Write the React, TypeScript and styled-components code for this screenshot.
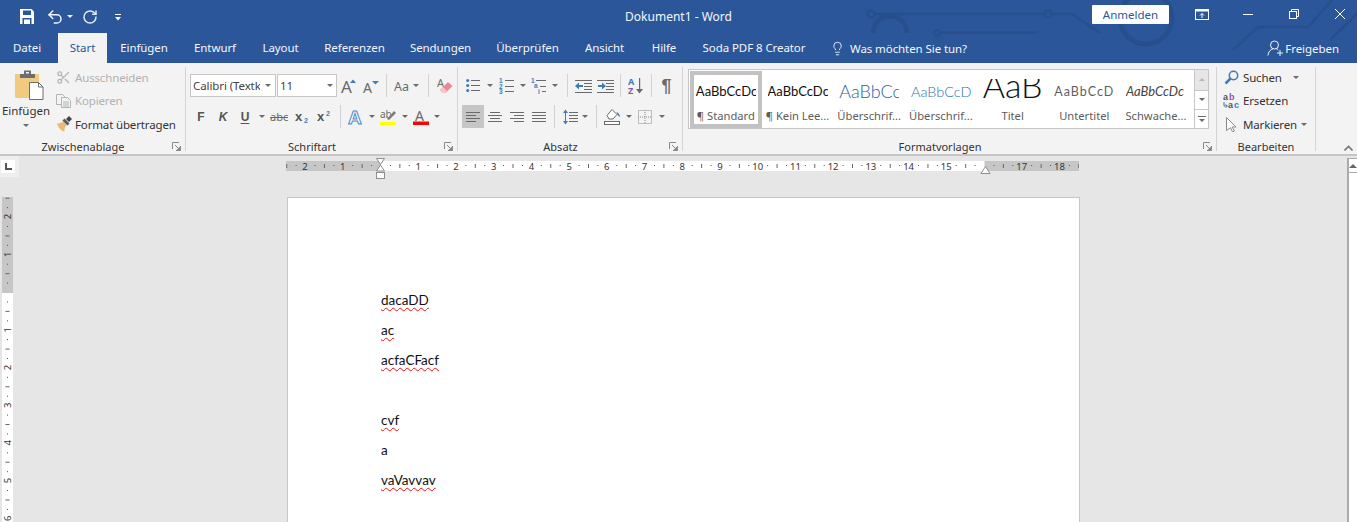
import React from "react";
import styled, { createGlobalStyle } from "styled-components";
import { Lightbulb, RotateCw, Scissors, Undo2 } from "lucide-react";

const UI_FONT = `"Noto Sans", "Open Sans", sans-serif`;
const DOC_FONT = `"Lato", "Liberation Sans", sans-serif`;
const GREY = "#6a6a6a";
const BLUE = "#3f7cb8";

const GlobalStyle = createGlobalStyle`
  html, body { margin: 0; padding: 0; height: 100%; overflow: hidden; background: #e6e6e6; }
  body { font-family: ${UI_FONT}; font-size: 12px; color: #333; }
  * { box-sizing: border-box; }
  svg { display: block; flex: none; }
`;

const Window = styled.div`
  width: 1357px;
  height: 522px;
  display: flex;
  flex-direction: column;
  overflow: hidden;
`;

/* ---------- header ---------- */

const Header = styled.header`
  position: relative;
  background: #2b579a;
  color: #fff;
  height: 63px;
  flex: none;
`;

const Circuit = styled.svg`
  position: absolute;
  left: 0;
  top: 0;
`;

const TitleBar = styled.div`
  position: relative;
  height: 33px;
  display: grid;
  grid-template-columns: 1fr auto 1fr;
  align-items: center;
`;

const QuickAccess = styled.div`
  display: flex;
  align-items: center;
  padding-left: 18px;
`;

const QuickSlot = styled.div<{ $w: number; $pl?: number }>`
  width: ${(p) => p.$w}px;
  padding-left: ${(p) => p.$pl ?? 0}px;
  display: flex;
  align-items: center;
  justify-content: center;
`;

const TitleText = styled.div`
  font-size: 12px;
  color: #f4f6fa;
`;

const WindowActions = styled.div`
  display: flex;
  justify-content: flex-end;
  align-items: center;
  margin-right: -6px;
`;

const SignIn = styled.div`
  width: 77px;
  height: 19px;
  margin: -4px 10px 0 0;
  background: #fff;
  color: #2b579a;
  border-radius: 1px;
  font-size: 11.5px;
  line-height: 19px;
  text-align: center;
`;

const WindowButton = styled.div`
  width: 46px;
  height: 28px;
  margin-top: -5px;
  display: flex;
  align-items: center;
  justify-content: center;
`;

const TabBar = styled.nav`
  position: relative;
  height: 30px;
  display: flex;
  align-items: stretch;
`;

const Tab = styled.div<{ $active?: boolean; $w: number; $first?: boolean }>`
  width: ${(p) => p.$w}px;
  flex: none;
  padding-left: ${(p) => (p.$first ? 13 : 0)}px;
  text-align: ${(p) => (p.$first ? "left" : "center")};
  line-height: 29px;
  font-size: 11.5px;
  letter-spacing: -0.08px;
  white-space: nowrap;
  color: ${(p) => (p.$active ? "#2b579a" : "#f4f6fa")};
  background: ${(p) => (p.$active ? "#f3f3f3" : "transparent")};
`;

const TellMe = styled.div`
  display: flex;
  align-items: center;
  gap: 5px;
  margin-left: 12px;
  font-size: 11.5px;
  letter-spacing: -0.08px;
  color: #f4f6fa;
`;

const Share = styled.div`
  margin-left: auto;
  padding-right: 18px;
  display: flex;
  align-items: center;
  gap: 2px;
  font-size: 11.5px;
  letter-spacing: -0.05px;
  color: #f4f6fa;
`;

/* ---------- ribbon ---------- */

const Ribbon = styled.section`
  height: 93px;
  flex: none;
  display: flex;
  padding-top: 4px;
  background: #f3f3f3;
  border-bottom: 2px solid #c6c6c6;
`;

const Group = styled.div<{ $w: number }>`
  position: relative;
  width: ${(p) => p.$w}px;
  height: 84px;
  flex: none;
  display: flex;
  flex-direction: column;
  border-right: 1px solid #d4d4d4;
`;

const GroupBody = styled.div<{ $pad?: number; $top?: number }>`
  flex: 1;
  min-height: 0;
  padding: ${(p) => p.$top ?? 7}px 0 0 ${(p) => p.$pad ?? 4}px;
`;

const GroupLabel = styled.div<{ $plain?: boolean }>`
  height: 14px;
  margin-bottom: -3px;
  padding-right: ${(p) => (p.$plain ? 0 : 19)}px;
  line-height: 14px;
  font-size: 11px;
  text-align: center;
  color: #333;
`;

const Launcher = styled.svg`
  position: absolute;
  right: 4px;
  bottom: 0;
`;

const ToolRow = styled.div<{ $gap?: number }>`
  height: 23px;
  display: flex;
  align-items: center;
  margin-bottom: ${(p) => p.$gap ?? 8}px;
`;

const Tool = styled.div<{ $w: number; $on?: boolean }>`
  width: ${(p) => p.$w}px;
  height: 23px;
  flex: none;
  display: flex;
  align-items: center;
  justify-content: center;
  background: ${(p) => (p.$on ? "#c6c6c6" : "transparent")};
`;

const Caret = styled.span<{ $w?: number; $h?: number; $color?: string }>`
  width: ${(p) => p.$w ?? 14}px;
  height: ${(p) => p.$h ?? 23}px;
  flex: none;
  display: flex;
  align-items: center;
  justify-content: center;
  &::after {
    content: "";
    border-top: 3px solid ${(p) => p.$color ?? GREY};
    border-left: 3px solid transparent;
    border-right: 3px solid transparent;
  }
`;

const Divider = styled.span<{ $l: number; $r: number }>`
  width: 1px;
  height: 23px;
  flex: none;
  margin: 0 ${(p) => p.$r}px 0 ${(p) => p.$l}px;
  background: #d2d2d2;
`;

const Glyph = styled.span<{ $italic?: boolean; $under?: boolean }>`
  font-family: "Liberation Sans", sans-serif;
  font-weight: 700;
  font-size: 12px;
  color: #555;
  font-style: ${(p) => (p.$italic ? "italic" : "normal")};
  text-decoration: ${(p) => (p.$under ? "underline" : "none")};
  text-underline-offset: 2px;
`;

const PasteButton = styled.div`
  width: 52px;
  flex: none;
  display: flex;
  flex-direction: column;
  align-items: center;
  padding-top: 3px;
  font-size: 11.5px;
  color: #333;
`;

const PasteIconBox = styled.div`
  padding-left: 8px;
`;

const PasteLabel = styled.div`
  margin-top: 3px;
  line-height: 16px;
`;

const SmallList = styled.div`
  display: flex;
  flex-direction: column;
  padding-left: 4px;
  margin-top: -1px;
`;

const SmallAction = styled.div<{ $off?: boolean }>`
  height: 23.3px;
  display: flex;
  align-items: center;
  gap: 4px;
  white-space: nowrap;
  font-size: 11.5px;
  letter-spacing: -0.15px;
  color: ${(p) => (p.$off ? "#b1b1b1" : "#333")};
`;

const IconBox = styled.span<{ $w?: number }>`
  width: ${(p) => p.$w ?? 15}px;
  flex: none;
  display: flex;
  justify-content: center;
`;

const ClipRow = styled.div`
  display: flex;
  height: 100%;
`;

const EditList = styled.div`
  margin-top: -1px;
`;

const Combo = styled.div<{ $w: number }>`
  width: ${(p) => p.$w}px;
  height: 23px;
  flex: none;
  display: flex;
  align-items: center;
  background: #fff;
  border: 1px solid #c6c6c6;
  margin-right: 1px;
  padding-left: 2px;
  font-size: 11.5px;
  letter-spacing: -0.1px;
  color: #444;
  overflow: hidden;
  white-space: nowrap;
`;

const ComboText = styled.span`
  flex: 1;
  overflow: hidden;
`;

const Gallery = styled.div`
  display: flex;
  height: 60px;
  margin: 2px 0 0 5px;
  width: 521px;
  border: 1px solid #c6c6c6;
  background: #fff;
`;

const GalleryItems = styled.div`
  flex: 1;
  display: flex;
  padding: 1px 2px 0 1px;
`;

const StyleCard = styled.div<{ $selected?: boolean }>`
  width: 71.7px;
  height: 57px;
  flex: none;
  display: flex;
  flex-direction: column;
  align-items: center;
  padding-top: ${(p) => (p.$selected ? 2 : 6)}px;
  border: ${(p) => (p.$selected ? "4px solid #c2c2c2" : "none")};
`;

const Preview = styled.div<{ $size: number; $color: string; $italic?: boolean; $spaced?: boolean; $big?: boolean; $light?: boolean }>`
  width: 60px;
  height: ${(p) => (p.$big ? 27 : 29)}px;
  margin-top: ${(p) => (p.$big ? 2 : 0)}px;
  flex: none;
  overflow: hidden;
  white-space: nowrap;
  text-align: ${(p) => (p.$big ? "center" : "left")};
  font-family: ${DOC_FONT};
  font-size: ${(p) => p.$size}px;
  line-height: ${(p) => (p.$big ? 11 : 29)}px;
  font-weight: ${(p) => (p.$light ? 300 : 400)};
  font-style: ${(p) => (p.$italic ? "italic" : "normal")};
  letter-spacing: ${(p) => (p.$spaced ? "1px" : "0")};
  color: ${(p) => p.$color};
`;

const StyleName = styled.div`
  font-size: 11.2px;
  line-height: 14px;
  margin-top: 3px;
  color: #5c5c5c;
  white-space: nowrap;
`;

const GalleryScroll = styled.div`
  width: 14px;
  margin-left: auto;
  display: flex;
  flex-direction: column;
  border-left: 1px solid #c6c6c6;
`;

const ScrollStep = styled.div<{ $off?: boolean; $h: number }>`
  height: ${(p) => p.$h}px;
  display: flex;
  align-items: center;
  justify-content: center;
  background: ${(p) => (p.$off ? "#e6e6e6" : "#fff")};
  border-bottom: 1px solid #c6c6c6;
  &:last-child { border-bottom: none; }
`;

const Collapse = styled.svg`
  align-self: flex-end;
  margin: 0 0 3px 28px;
`;

/* ---------- document area ---------- */

const WorkArea = styled.main`
  flex: 1;
  min-height: 0;
  display: flex;
  background: #e6e6e6;
`;

const Canvas = styled.div`
  flex: 1;
  min-width: 0;
  display: flex;
  flex-direction: column;
`;

const RulerRow = styled.div`
  height: 41px;
  flex: none;
  display: flex;
  align-items: flex-start;
`;

const TabCorner = styled.div`
  width: 19px;
  height: 21px;
  flex: none;
  padding: 4px 0 0 1px;
  background: #eeeeee;
`;

const TabStopButton = styled.div`
  width: 14px;
  height: 13px;
  background: #fff;
  display: flex;
  align-items: center;
  justify-content: center;
`;

const HorizontalRuler = styled.svg`
  margin: -1px 0 0 267px;
`;

const DocRow = styled.div`
  flex: 1;
  min-height: 0;
  display: flex;
  align-items: flex-start;
  padding-left: 2px;
`;

const Page = styled.article`
  width: 793px;
  height: 340px;
  margin-left: 274px;
  padding: 87px 0 0 93px;
  background: #fff;
  border: 1px solid #c6c6c6;
  border-bottom: none;
  font-family: ${DOC_FONT};
  font-size: 13.5px;
  color: #111;
`;

const Para = styled.p`
  height: 30px;
  margin: 0;
  line-height: 30px;
`;

const Misspelled = styled.span`
  text-decoration: underline wavy #f01010;
  text-decoration-thickness: 1px;
  text-underline-offset: 1.5px;
`;

const ScrollBar = styled.div`
  width: 10px;
  flex: none;
  margin-top: 2px;
  background: #fff;
  border-left: 2px solid #ababab;
  border-top: 1px solid #ababab;
`;

const ScrollUp = styled.div`
  height: 14px;
  display: flex;
  align-items: center;
  justify-content: center;
  border-bottom: 1px solid #ababab;
  &::after {
    content: "";
    border-bottom: 4px solid #666;
    border-left: 4px solid transparent;
    border-right: 4px solid transparent;
  }
`;

/* ---------- drawings ---------- */

const Svg: React.FC<{ w?: number; h?: number; children: React.ReactNode }> = ({ w = 16, h = 16, children }) => (
  <svg width={w} height={h} viewBox={`0 0 ${w} ${h}`}>
    {children}
  </svg>
);

type Seg = [number, number, number];

const Lines: React.FC<{ segs: Seg[]; color?: string }> = ({ segs, color = GREY }) => (
  <>
    {segs.map(([a, b, y], i) => (
      <rect key={i} x={a} y={y} width={b - a} height={1} fill={color} />
    ))}
  </>
);

const SaveIcon = () => (
  <Svg w={14} h={15}>
    <path d="M0 0h11.5L14 2.5V15H0z" fill="#fff" />
    <rect x="3" y="1.5" width="8" height="4.5" fill="#2b579a" />
    <rect x="2.5" y="9" width="9" height="6" fill="#2b579a" />
    <rect x="4" y="10.5" width="6" height="4.5" fill="#fff" />
  </Svg>
);

const CustomizeIcon = () => (
  <Svg w={8} h={8}>
    <rect x="1" y="1" width="6" height="1" fill="#fff" />
    <path d="M1 4h6L4 7.5z" fill="#fff" />
  </Svg>
);

const RibbonDisplayIcon = () => (
  <svg width="14" height="11" viewBox="0 0 14 11" fill="none">
    <rect x="0.5" y="0.5" width="13" height="10" stroke="#fff" />
    <rect x="0.5" y="0.5" width="13" height="2" fill="#fff" />
    <path d="M7 9V4.5M5 6.5l2-2 2 2" stroke="#fff" />
  </svg>
);

const MinimizeIcon = () => <Svg w={10} h={1}><rect width="10" height="1" fill="#fff" /></Svg>;

const RestoreIcon = () => (
  <svg width="10" height="10" viewBox="0 0 10 10" fill="none" stroke="#fff">
    <rect x="0.5" y="2.5" width="7" height="7" />
    <path d="M2.5 2.5v-2h7v7h-2" />
  </svg>
);

const CloseIcon = () => (
  <svg width="10" height="10" viewBox="0 0 10 10" fill="none" stroke="#fff">
    <path d="M0 0l10 10M10 0L0 10" />
  </svg>
);

const ShareIcon = () => (
  <svg width="16" height="16" viewBox="0 0 16 16" fill="none" stroke="#f0f3f8">
    <circle cx="7.5" cy="5" r="4" />
    <path d="M1 15.5c0-3.5 2.5-6 5-6.7M9 8.6c1 .3 1.8.8 2.4 1.4M10 13h6M13 10v6" />
  </svg>
);

const PasteIcon = () => (
  <svg width="30" height="30" viewBox="0 0 30 30">
    <path d="M0 4h24v24H1.5A1.5 1.5 0 0 1 0 26.5z" fill="#f1c97f" />
    <path d="M5 4h15v4H5z" fill="#6e6e6e" />
    <path d="M9 0.5h7v4H9z" fill="#6e6e6e" />
    <rect x="11" y="2" width="3" height="1.5" fill="#f3f3f3" />
    <path d="M14.5 12.5h9l4.5 4.5v12.5H14.5z" fill="#fff" stroke="#6e6e6e" />
    <path d="M23.5 12.5V17H28" fill="none" stroke="#6e6e6e" />
  </svg>
);

const CopyIcon = () => (
  <svg width="15" height="14" viewBox="0 0 15 14" fill="#f3f3f3" stroke="#b3b3b3">
    <path d="M0.5 0.5h6l2 2v8h-8z" />
    <path d="M5.5 3.5h6l3 3v7h-9z" />
    <path d="M7 8h6M7 10h6M7 12h6" />
  </svg>
);

const PainterIcon = () => (
  <svg width="16" height="16" viewBox="0 0 16 16">
    <path d="M1 7.5c3 .5 5-1 6-2.5l4 4c-1.5 1-3 3.5-2.5 6.5C5 15 2 11.500 1 7.5z" fill="#e9bb74" />
    <path d="M6.5 4.5l2-2 5 5-2 2z" fill="#5a5a5a" />
    <path d="M10 3l3-3 3 3-3 3z" fill="#444" />
  </svg>
);

const GrowIcon: React.FC<{ shrink?: boolean }> = ({ shrink }) => (
  <Svg w={18} h={18}>
    <text x="1" y="16" fontFamily="Noto Sans" fontSize={shrink ? 14 : 17} fill={GREY}>A</text>
    <path d={shrink ? "M10 4h7l-3.5 3.5z" : "M10 6h6l-3-3.5z"} fill={BLUE} />
  </Svg>
);

const CaseIcon = () => (
  <Svg w={18} h={16}>
    <text x="0" y="13" fontFamily="Noto Sans" fontSize="12.5" fill={GREY}>Aa</text>
  </Svg>
);

const EraserIcon = () => (
  <Svg w={16} h={17}>
    <text x="0" y="10" fontFamily="Noto Sans" fontSize="11" fill={GREY}>A</text>
    <path d="M3 13l8-8 4.5 4-7 7H6z" fill="#ec8795" />
    <path d="M3 13l3-3 4 4-2 2H6z" fill="#f6c4cb" />
  </Svg>
);

const StrikeIcon = () => (
  <Svg w={20} h={14}>
    <text x="0" y="11" fontFamily="Noto Sans" fontSize="11" fill={GREY}>abc</text>
    <rect x="0" y="7" width="18" height="1" fill={GREY} />
  </Svg>
);

const ScriptIcon: React.FC<{ sup?: boolean }> = ({ sup }) => (
  <Svg w={16} h={14}>
    <text x="0" y="11" fontFamily="Liberation Sans" fontWeight="700" fontSize="13" fill="#555">x</text>
    <text x="9" y={sup ? 6 : 13} fontFamily="Liberation Sans" fontWeight="700" fontSize="7" fill={BLUE}>2</text>
  </Svg>
);

const EffectIcon = () => (
  <Svg w={16} h={16}>
    <text x="0" y="15" fontFamily="Liberation Sans" fontWeight="700" fontSize="19" fill="#fff" stroke="#4d87c7" strokeWidth="1">A</text>
  </Svg>
);

const HighlightIcon = () => (
  <Svg w={16} h={16}>
    <text x="0" y="9" fontFamily="Noto Sans" fontSize="10" fill={GREY}>ab</text>
    <path d="M7 10l7-8 2 2-7 7z" fill="#7c7c7c" />
    <rect y="13" width="16" height="3.5" fill="#ffff00" />
  </Svg>
);

const FontColorIcon = () => (
  <Svg w={16} h={16}>
    <text x="2" y="12" fontFamily="Noto Sans" fontSize="14" fill={GREY}>A</text>
    <rect y="12.5" width="16" height="3.5" fill="#ff0000" />
  </Svg>
);

const BulletsIcon = () => (
  <Svg w={15} h={15}>
    <Lines segs={[[5, 14, 2], [5, 14, 7], [5, 14, 12]]} />
    {[2.5, 7.5, 12.5].map((y) => <circle key={y} cx="1.7" cy={y} r="1.6" fill={BLUE} />)}
  </Svg>
);

const NumberedIcon = () => (
  <Svg w={15} h={16}>
    <Lines segs={[[6, 15, 2], [6, 15, 8], [6, 15, 13]]} />
    {["1", "2", "3"].map((n, i) => (
      <text key={n} x="0" y={5 + i * 5.5} fontFamily="Liberation Sans" fontWeight="700" fontSize="6.5" fill={BLUE}>{n}</text>
    ))}
  </Svg>
);

const MultilevelIcon = () => (
  <Svg w={16} h={16}>
    <Lines segs={[[5, 15, 2], [9, 15, 8], [11, 15, 13]]} />
    <text x="0" y="5" fontFamily="Liberation Sans" fontWeight="700" fontSize="6.5" fill={BLUE}>1</text>
    <text x="3" y="10" fontFamily="Liberation Sans" fontWeight="700" fontSize="6.5" fill={BLUE}>a</text>
    <text x="7" y="16" fontFamily="Liberation Sans" fontWeight="700" fontSize="6.5" fill={BLUE}>i</text>
  </Svg>
);

const IndentIcon: React.FC<{ flip?: boolean }> = ({ flip }) => (
  <Svg w={17} h={14}>
    <Lines segs={[[0, 17, 1], [9, 17, 4], [9, 17, 7], [9, 17, 10], [0, 17, 13]]} />
    <path d={flip ? "M1 6h4V3.5L9 7l-4 3.5V8H1z" : "M8 6H4V3.5L0 7l4 3.5V8h4z"} fill={BLUE} />
  </Svg>
);

const SortIcon = () => (
  <Svg w={16} h={18}>
    <text x="0" y="8" fontFamily="Noto Sans" fontWeight="700" fontSize="9" fill={BLUE}>A</text>
    <text x="0" y="17" fontFamily="Noto Sans" fontWeight="700" fontSize="9" fill="#8a55b0">Z</text>
    <rect x="11" y="1" width="1.2" height="14" fill={GREY} />
    <path d="M8 12h7l-3.5 4.5z" fill={GREY} />
  </Svg>
);

const PilcrowIcon = () => (
  <Svg w={12} h={17}>
    <text x="0.5" y="15" fontFamily="Liberation Sans" fontWeight="700" fontSize="18" fill={GREY}>¶</text>
  </Svg>
);

const AlignIcon: React.FC<{ mode: "left" | "center" | "right" | "justify" }> = ({ mode }) => {
  const rows: Seg[] = [0, 1, 2, 3].map((i) => {
    const short = i % 2 === 1 ? 14 : 10;
    const w = i === 0 || i === 2 ? 14 : 10;
    if (mode === "justify") return [0, 14, 1 + i * 3];
    if (mode === "left") return [0, w, 1 + i * 3];
    if (mode === "right") return [14 - w, 14, 1 + i * 3];
    return [(14 - short) / 2, (14 + short) / 2, 1 + i * 3];
  });
  return <Svg w={14} h={12}><Lines segs={rows} /></Svg>;
};

const SpacingIcon = () => (
  <Svg w={15} h={16}>
    <Lines segs={[[6, 15, 3], [6, 15, 6], [6, 15, 9], [6, 15, 12]]} />
    <path d="M0 4l2.5-3.5L5 4H3v8h2l-2.5 3.5L0 12h2V4z" fill={BLUE} />
  </Svg>
);

const ShadingIcon = () => (
  <svg width="17" height="17" viewBox="0 0 17 17" fill="none">
    <path d="M3 7.5L8 1.5l5 5-4 4.5H5z" fill="#fff" stroke={GREY} />
    <path d="M12.5 4c2 1 3.5 2.5 3.5 5l-2.5-2z" fill={BLUE} />
    <rect x="0.5" y="13.5" width="15" height="3" fill="#fff" stroke={GREY} />
  </svg>
);

const BordersIcon = () => (
  <svg width="14" height="14" viewBox="0 0 14 14" fill="none" stroke="#8a8a8a" strokeDasharray="1 1">
    <rect x="0.5" y="0.5" width="13" height="13" />
    <path d="M7 0v14M0 7h14" />
  </svg>
);

const SearchIcon = () => (
  <svg width="15" height="15" viewBox="0 0 15 15" fill="none" stroke="#3f7cb8">
    <circle cx="9.5" cy="5.5" r="4.2" strokeWidth="1.5" />
    <path d="M6.5 8.5L1.5 13.5" strokeWidth="2.5" />
  </svg>
);

const ReplaceIcon = () => (
  <Svg w={17} h={16}>
    <text x="0" y="7" fontFamily="Liberation Sans" fontWeight="700" fontSize="9" fill="#555">a</text>
    <text x="6" y="7" fontFamily="Liberation Sans" fontWeight="700" fontSize="9" fill="#8a55b0">b</text>
    <text x="5" y="15" fontFamily="Liberation Sans" fontWeight="700" fontSize="9" fill="#555">a</text>
    <text x="11" y="15" fontFamily="Liberation Sans" fontWeight="700" fontSize="9" fill={BLUE}>c</text>
    <path d="M1 9v4h3M2.5 11.5L4.5 13l-2 1.5" fill="none" stroke={BLUE} />
  </Svg>
);

const SelectIcon = () => (
  <svg width="11" height="15" viewBox="0 0 11 15" fill="#fff" stroke="#8a8a8a">
    <path d="M0.5 0.5l9.5 9.5H6l2.5 4-2 .8L4.5 10.7 0.5 13.5z" />
  </svg>
);

const TinyCaret: React.FC<{ up?: boolean; line?: boolean; off?: boolean }> = ({ up, line, off }) => (
  <Svg w={8} h={7}>
    {line && <rect x="0" y="0" width="8" height="1" fill={GREY} />}
    <path d={up ? "M1 5h6L4 2z" : line ? "M1 3h6L4 6z" : "M1 2h6L4 5z"} fill={off ? "#b5b5b5" : GREY} />
  </Svg>
);

const GroupLauncher = () => (
  <Launcher width="9" height="9" viewBox="0 0 9 9" fill="none" stroke="#8a8a8a">
    <path d="M0.5 7V0.5H7" />
    <path d="M3 3l4 4" />
    <path d="M4 8.5h4.5V4" fill="#8a8a8a" />
  </Launcher>
);

const RULER_W = 793;
const ZERO = 94.5;
const CM = 37.72;

// dots at quarter cm, small bars at half cm, numbers at whole cm
const rulerMarks = (from: number, to: number) => {
  const marks: { v: number; kind: "num" | "bar" | "dot" }[] = [];
  for (let q = from * 4; q <= to * 4; q++) {
    if (q === 0) continue;
    const kind = q % 4 === 0 ? "num" : q % 2 === 0 ? "bar" : "dot";
    marks.push({ v: q / 4, kind });
  }
  return marks;
};

const TopRuler = () => (
  <HorizontalRuler width={RULER_W} height={26} viewBox={`0 0 ${RULER_W} 26`}>
    <rect x="0" y="6" width={RULER_W} height="10" fill="#c6c6c6" />
    <rect x={ZERO} y="6" width="604" height="10" fill="#fff" />
    {rulerMarks(-2.5, 18.5).map(({ v, kind }) => {
      const x = ZERO + v * CM;
      if (x < 0 || x > RULER_W || v === 16) return null;
      if (kind === "num")
        return <text key={v} x={x} y="15" textAnchor="middle" fontFamily="Noto Sans" fontSize="9.5" fill="#333">{Math.abs(v)}</text>;
      if (kind === "bar") return <rect key={v} x={x} y="9" width="1" height="4" fill="#666" />;
      return <rect key={v} x={x} y="10" width="1" height="1" fill="#555" />;
    })}
    <path d="M90.5 3.5h8L94.5 9.5zM94.5 10l4 6h-8z" fill="#fff" stroke="#8f8f8f" />
    <rect x="90.5" y="17.5" width="8" height="6" fill="#fff" stroke="#8f8f8f" />
    <path d="M695 18.5l4.5-7 4.5 7z" fill="#fff" stroke="#8f8f8f" />
  </HorizontalRuler>
);

const SideRuler = () => (
  <svg width="11" height="327" viewBox="0 0 11 327">
    <rect width="11" height="96" fill="#c6c6c6" />
    <rect y="96" width="11" height="231" fill="#fff" />
    {rulerMarks(-2.5, 6.5).map(({ v, kind }) => {
      const y = 95 + v * CM;
      if (y < 0 || y > 327) return null;
      if (kind === "num")
        return <text key={v} transform={`translate(9 ${y}) rotate(-90)`} textAnchor="middle" fontFamily="Noto Sans" fontSize="9.5" fill="#333">{Math.abs(v)}</text>;
      if (kind === "bar") return <rect key={v} x="3.5" y={y} width="4" height="1" fill="#666" />;
      return <rect key={v} x="5" y={y} width="1" height="1" fill="#555" />;
    })}
  </svg>
);

const TABS: [string, number][] = [
  ["Datei", 58],
  ["Start", 49],
  ["Einfügen", 74],
  ["Entwurf", 68],
  ["Layout", 63],
  ["Referenzen", 85],
  ["Sendungen", 87],
  ["Überprüfen", 87],
  ["Ansicht", 67],
  ["Hilfe", 52],
  ["Soda PDF 8 Creator", 128],
];

const STYLES = [
  { name: "¶ Standard", size: 13, color: "#111", selected: true },
  { name: "¶ Kein Lee...", size: 13, color: "#111" },
  { name: "Überschrif...", size: 18, color: "#2f5f9e", light: true },
  { name: "Überschrif...", size: 14.5, color: "#2f74b5", light: true },
  { name: "Titel", size: 34, color: "#111", big: true, light: true },
  { name: "Untertitel", size: 12.5, color: "#5f5f5f", spaced: true },
  { name: "Schwache...", size: 13, color: "#444", italic: true },
];

const App: React.FC = () => (
  <Window>
    <GlobalStyle />
    <Header>
      <Circuit width="1357" height="63" viewBox="0 0 1357 63" fill="none" stroke="#274f8d" strokeWidth="2.5">
        <circle cx="871" cy="14" r="3.5" />
        <path d="M875 14h169M1052 14h20l28 19" />
        <circle cx="1048" cy="14" r="3.5" />
        <path d="M873 33a17 17 0 0 1 34 0" strokeWidth="5" />
        <circle cx="937" cy="33" r="3" />
        <path d="M940 32.5h97" />
        <circle cx="1146" cy="18" r="26" strokeWidth="5" />
        <path d="M1233 50l25-23h50l24-27M1330 40l27-26" strokeWidth="2.5" />
      </Circuit>
      <TitleBar>
        <QuickAccess>
          <QuickSlot $w={17}><SaveIcon /></QuickSlot>
          <QuickSlot $w={30} $pl={10}><Undo2 size={18} color="#f2f5fa" strokeWidth={2} /></QuickSlot>
          <Caret $w={10} $color="#f2f5fa" />
          <QuickSlot $w={30}><RotateCw size={16} color="#e4eaf3" strokeWidth={2.2} /></QuickSlot>
          <QuickSlot $w={26}><CustomizeIcon /></QuickSlot>
        </QuickAccess>
        <TitleText>Dokument1 - Word</TitleText>
        <WindowActions>
          <SignIn>Anmelden</SignIn>
          <WindowButton><RibbonDisplayIcon /></WindowButton>
          <WindowButton><MinimizeIcon /></WindowButton>
          <WindowButton><RestoreIcon /></WindowButton>
          <WindowButton><CloseIcon /></WindowButton>
        </WindowActions>
      </TitleBar>
      <TabBar>
        {TABS.map(([label, w], i) => (
          <Tab key={label} $w={w} $first={i === 0} $active={label === "Start"}>{label}</Tab>
        ))}
        <TellMe>
          <Lightbulb size={15} strokeWidth={1.4} />
          Was möchten Sie tun?
        </TellMe>
        <Share>
          <ShareIcon />
          Freigeben
        </Share>
      </TabBar>
    </Header>

    <Ribbon>
      <Group $w={186}>
        <GroupBody $pad={0} $top={0}>
          <ClipRow>
            <PasteButton>
              <PasteIconBox><PasteIcon /></PasteIconBox>
              <PasteLabel>Einfügen</PasteLabel>
              <Caret $w={10} $h={12} />
            </PasteButton>
            <SmallList>
              <SmallAction $off>
                <IconBox><Scissors size={15} color="#b5b5b5" /></IconBox>
                Ausschneiden
              </SmallAction>
              <SmallAction $off>
                <IconBox><CopyIcon /></IconBox>
                Kopieren
              </SmallAction>
              <SmallAction>
                <IconBox><PainterIcon /></IconBox>
                Format übertragen
              </SmallAction>
            </SmallList>
          </ClipRow>
        </GroupBody>
        <GroupLabel>Zwischenablage</GroupLabel>
        <GroupLauncher />
      </Group>

      <Group $w={272}>
        <GroupBody>
          <ToolRow>
            <Combo $w={86}><ComboText>Calibri (Textk</ComboText><Caret $w={15} /></Combo>
            <Combo $w={60}><ComboText>11</ComboText><Caret $w={12} /></Combo>
            <Tool $w={22}><GrowIcon /></Tool>
            <Tool $w={22}><GrowIcon shrink /></Tool>
            <Divider $l={4} $r={6} />
            <Tool $w={20}><CaseIcon /></Tool>
            <Caret $w={6} />
            <Divider $l={9} $r={5} />
            <Tool $w={22}><EraserIcon /></Tool>
          </ToolRow>
          <ToolRow>
            <Tool $w={22}><Glyph>F</Glyph></Tool>
            <Tool $w={22}><Glyph $italic>K</Glyph></Tool>
            <Tool $w={22}><Glyph $under>U</Glyph></Tool>
            <Caret $w={11} />
            <Tool $w={25}><StrikeIcon /></Tool>
            <Tool $w={22}><ScriptIcon /></Tool>
            <Tool $w={22}><ScriptIcon sup /></Tool>
            <Divider $l={4} $r={4} />
            <Tool $w={22}><EffectIcon /></Tool>
            <Caret $w={10} />
            <Tool $w={22}><HighlightIcon /></Tool>
            <Caret $w={11} />
            <Tool $w={22}><FontColorIcon /></Tool>
            <Caret $w={9} />
          </ToolRow>
        </GroupBody>
        <GroupLabel>Schriftart</GroupLabel>
        <GroupLauncher />
      </Group>

      <Group $w={225}>
        <GroupBody>
          <ToolRow>
            <Tool $w={22}><BulletsIcon /></Tool>
            <Caret $w={11} />
            <Tool $w={23}><NumberedIcon /></Tool>
            <Caret $w={10} />
            <Tool $w={22}><MultilevelIcon /></Tool>
            <Caret $w={9} />
            <Divider $l={8} $r={4} />
            <Tool $w={22}><IndentIcon /></Tool>
            <Tool $w={22}><IndentIcon flip /></Tool>
            <Divider $l={4} $r={4} />
            <Tool $w={22}><SortIcon /></Tool>
            <Divider $l={4} $r={4} />
            <Tool $w={22}><PilcrowIcon /></Tool>
          </ToolRow>
          <ToolRow>
            <Tool $w={22} $on><AlignIcon mode="left" /></Tool>
            <Tool $w={22}><AlignIcon mode="center" /></Tool>
            <Tool $w={22}><AlignIcon mode="right" /></Tool>
            <Tool $w={22}><AlignIcon mode="justify" /></Tool>
            <Divider $l={4} $r={4} />
            <Tool $w={22}><SpacingIcon /></Tool>
            <Caret $w={7} />
            <Divider $l={8} $r={4} />
            <Tool $w={22}><ShadingIcon /></Tool>
            <Caret $w={11} />
            <Tool $w={22}><BordersIcon /></Tool>
            <Caret $w={12} />
          </ToolRow>
        </GroupBody>
        <GroupLabel>Absatz</GroupLabel>
        <GroupLauncher />
      </Group>

      <Group $w={534}>
        <Gallery>
          <GalleryItems>
            {STYLES.map((s, i) => (
              <StyleCard key={i} $selected={s.selected}>
                <Preview $size={s.size} $color={s.color} $italic={s.italic} $spaced={s.spaced} $big={s.big} $light={s.light}>
                  {s.big ? "AaB" : "AaBbCcDc"}
                </Preview>
                <StyleName>{s.name}</StyleName>
              </StyleCard>
            ))}
          </GalleryItems>
          <GalleryScroll>
            <ScrollStep $off $h={21}><TinyCaret up off /></ScrollStep>
            <ScrollStep $h={20}><TinyCaret /></ScrollStep>
            <ScrollStep $h={18}><TinyCaret line /></ScrollStep>
          </GalleryScroll>
        </Gallery>
        <GroupBody $top={0} />
        <GroupLabel>Formatvorlagen</GroupLabel>
        <GroupLauncher />
      </Group>

      <Group $w={99}>
        <GroupBody $pad={6} $top={0}>
          <EditList>
            <SmallAction>
              <IconBox $w={16}><SearchIcon /></IconBox>
              Suchen
              <Caret $w={20} />
            </SmallAction>
            <SmallAction>
              <IconBox $w={16}><ReplaceIcon /></IconBox>
              Ersetzen
            </SmallAction>
            <SmallAction>
              <IconBox $w={16}><SelectIcon /></IconBox>
              Markieren
              <Caret $w={6} />
            </SmallAction>
          </EditList>
        </GroupBody>
        <GroupLabel $plain>Bearbeiten</GroupLabel>
      </Group>

      <Collapse width="9" height="6" viewBox="0 0 9 6" fill="none" stroke="#777" strokeWidth="1.6">
        <path d="M0.5 5.5l4-4 4 4" />
      </Collapse>
    </Ribbon>

    <WorkArea>
      <Canvas>
        <RulerRow>
          <TabCorner>
            <TabStopButton>
              <Svg w={7} h={7}><path d="M0 0h2v5h5v2H0z" fill="#555" /></Svg>
            </TabStopButton>
          </TabCorner>
          <TopRuler />
        </RulerRow>
        <DocRow>
          <SideRuler />
          <Page>
            <Para><Misspelled>dacaDD</Misspelled></Para>
            <Para><Misspelled>ac</Misspelled></Para>
            <Para><Misspelled>acfaCFacf</Misspelled></Para>
            <Para />
            <Para><Misspelled>cvf</Misspelled></Para>
            <Para>a</Para>
            <Para><Misspelled>vaVavvav</Misspelled></Para>
          </Page>
        </DocRow>
      </Canvas>
      <ScrollBar>
        <ScrollUp />
      </ScrollBar>
    </WorkArea>
  </Window>
);

export default App;
